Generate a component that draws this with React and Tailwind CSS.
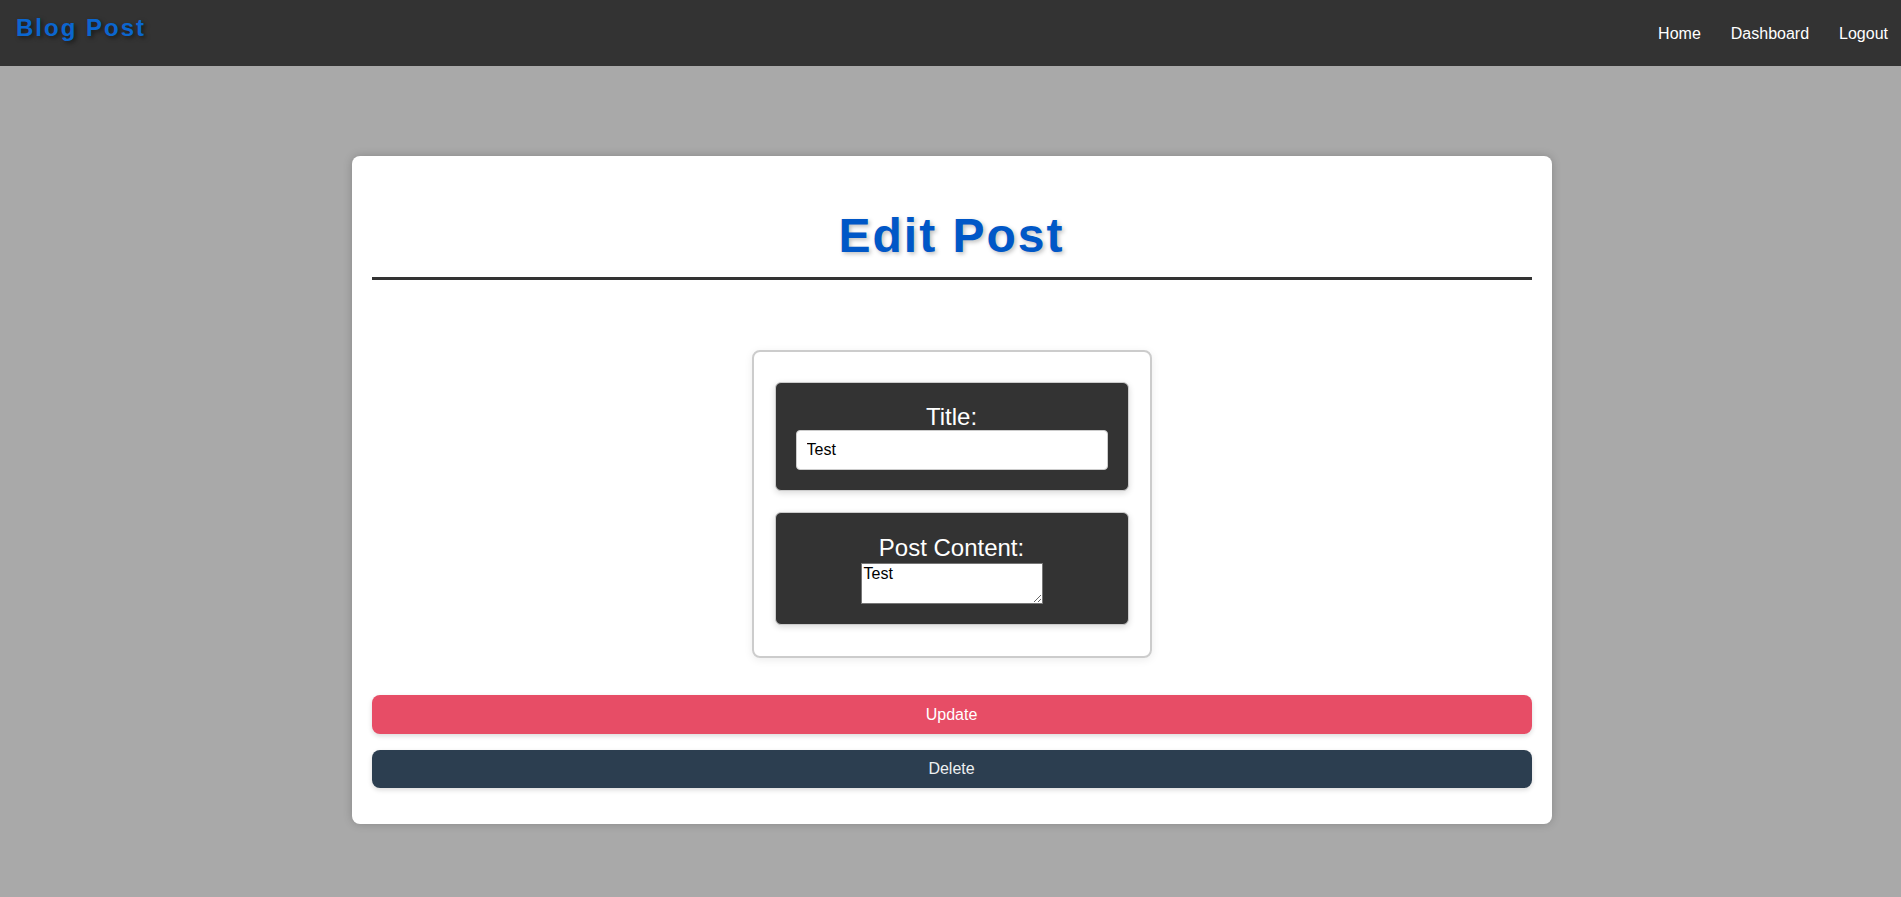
export default function App() {
  const font = { fontFamily: '"Liberation Sans", Arial, sans-serif' };
  return (
    <div className="min-h-[897px] bg-[#a9a9a9]" style={font}>
      <header className="h-[66px] bg-[#333333] flex justify-between pl-[16px] pr-[13px]">
        <div className="pt-[14px] text-[24px] leading-[27px] font-bold tracking-[2px] text-[#0b66cf] [text-shadow:2px_2px_4px_rgba(0,0,0,0.5)]">
          Blog Post
        </div>
        <nav className="flex items-center pt-[1px] gap-[30px] text-[16px] text-white">
          <a>Home</a>
          <a>Dashboard</a>
          <a>Logout</a>
        </nav>
      </header>
      <main className="pt-[90px] pb-[72px]">
        <div className="mx-auto w-[1200px] translate-x-[1px] bg-white rounded-[8px] shadow-[0_0_10px_rgba(0,0,0,0.2)] px-[20px] pt-[20px] pb-[36px]">
          <h1 className="mt-[32px] text-center text-[48px] leading-[55px] font-bold tracking-[2px] text-[#0057c7] [text-shadow:2px_2px_4px_rgba(0,0,0,0.25)] pb-[14px] border-b-[3px] border-[#333333]">
            Edit Post
          </h1>
          <div className="mt-[70px] mx-auto w-[400px] border-2 border-[#cccccc] rounded-[8px] px-[21px] pt-[30px] pb-[31px] flex flex-col gap-[21px] shadow-[0_2px_8px_rgba(0,0,0,0.08)]">
            <div className="bg-[#333333] border border-[#cccccc] rounded-[6px] pt-[20px] pb-[20px] px-[20px] text-center shadow-[0_2px_6px_rgba(0,0,0,0.15)]">
              <label className="block text-[24px] leading-[27px] text-white">Title:</label>
              <input
                defaultValue="Test"
                className="block w-full h-[40px] bg-white rounded-[4px] border border-[#cccccc] px-[10px] text-[16px] text-black outline-none"
                style={font}
              />
            </div>
            <div className="bg-[#333333] border border-[#cccccc] rounded-[6px] pt-[21px] pb-[20px] px-[20px] text-center shadow-[0_2px_6px_rgba(0,0,0,0.15)]">
              <label className="block text-[24px] leading-[28px] text-white">Post Content:</label>
              <textarea
                defaultValue="Test"
                className="block mx-auto mt-[1px] w-[182px] h-[41px] bg-white border border-[#767676] px-[2px] pt-[1px] pb-0 text-[16px] leading-[18px] text-black text-left outline-none resize"
                style={font}
              />
            </div>
          </div>
          <button className="mt-[37px] block w-full h-[39px] rounded-[8px] bg-[#e74d66] text-white text-[16px] shadow-[0_2px_5px_rgba(0,0,0,0.15)]">
            Update
          </button>
          <button className="mt-[16px] block w-full h-[38px] rounded-[8px] bg-[#2c3e50] text-[#ecf0f1] text-[16px] shadow-[0_2px_5px_rgba(0,0,0,0.15)]">
            Delete
          </button>
        </div>
      </main>
    </div>
  );
}
